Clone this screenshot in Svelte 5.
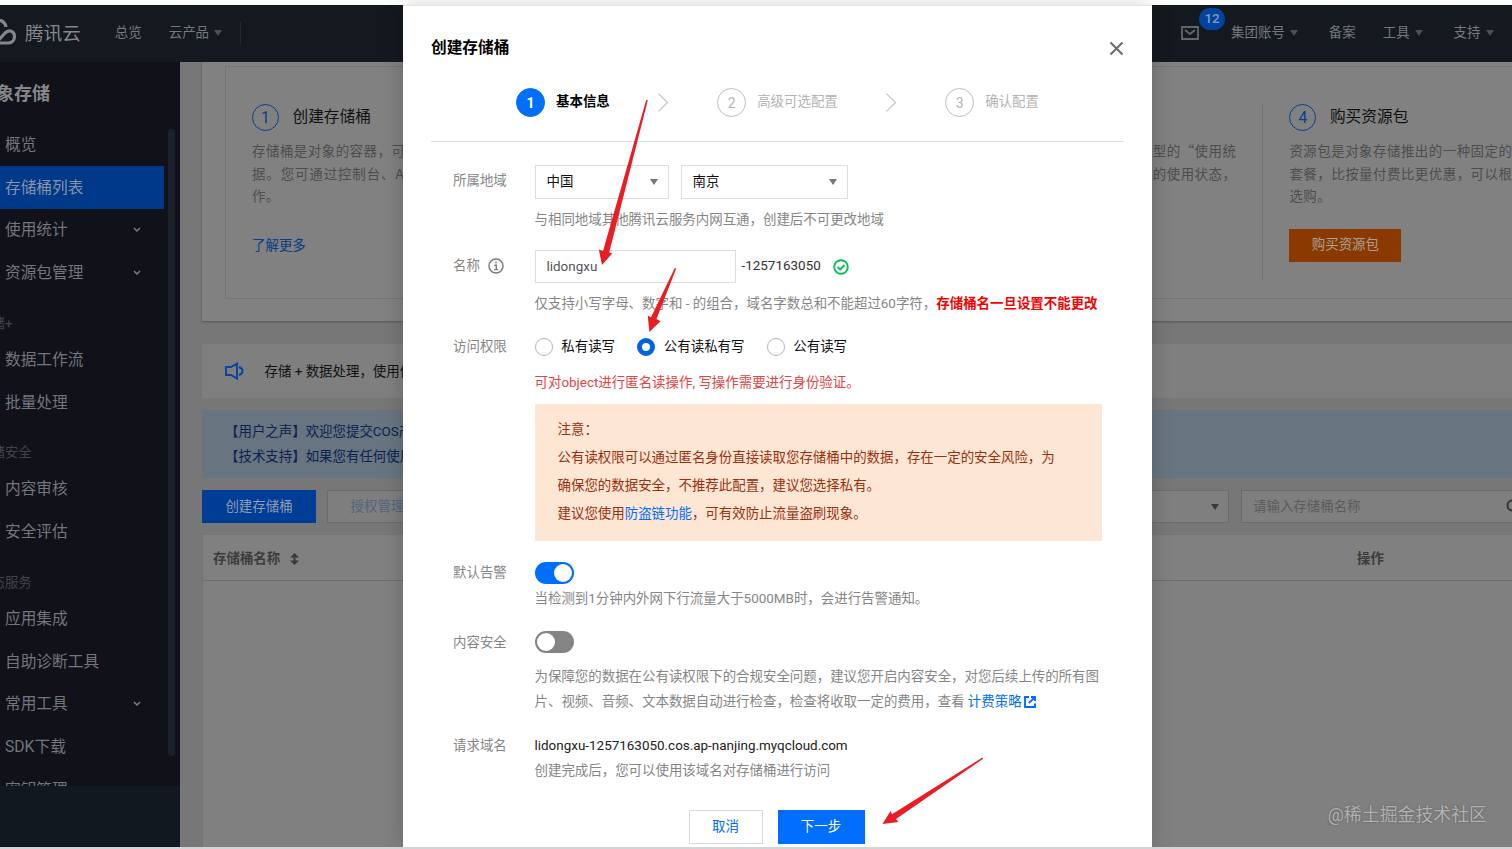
<script>
  const menu = [
    { name: "概览" },
    { name: "存储桶列表", active: true },
    { name: "使用统计", more: true },
    { name: "资源包管理", more: true },
    { name: "存储+", heading: true },
    { name: "数据工作流" },
    { name: "批量处理" },
    { name: "存储安全", heading: true },
    { name: "内容审核" },
    { name: "安全评估" },
    { name: "生态服务", heading: true },
    { name: "应用集成" },
    { name: "自助诊断工具" },
    { name: "常用工具", more: true },
    { name: "SDK下载" },
    { name: "密钥管理" },
  ]
  const steps = ["基本信息", "高级可选配置", "确认配置"]
  const access = ["私有读写", "公有读私有写", "公有读写"]
  let step = 0
  let selected = 1
  let bucketName = "lidongxu"
  let alarm = true
  let safety = false
</script>

<div class="page">
  <header class="nav">
    <svg class="logo" width="17" height="28" viewBox="0 0 17 28">
      <path d="M-6 2C0 -1 5 3 6 8M-4 24L5 14C9 10 14.500 12 14.500 17.500C14.500 22 11 24 8 24H-4" fill="none" stroke="#85888b" stroke-width="3.200" />
    </svg>
    <span class="brand">腾讯云</span>
    <span class="nav-item overview">总览</span>
    <span class="nav-item">云产品<i class="caret"></i></span>
    <i class="nav-line"></i>
    <div class="nav-right">
      <div class="mail">
        <svg width="18" height="14" viewBox="0 0 18 14"><path d="M1 1H17V13H1ZM4 4L9 8L14 4" fill="none" stroke="#62676b" stroke-width="1.800" /></svg>
        <b class="badge">12</b>
      </div>
      <span class="nav-item account">集团账号<i class="caret"></i></span>
      <span class="nav-item record">备案</span>
      <span class="nav-item tool">工具<i class="caret"></i></span>
      <span class="nav-item">支持<i class="caret"></i></span>
    </div>
  </header>

  <div class="body">
    <aside class="sidebar">
      <div class="menu">
        <h1>对象存储</h1>
        {#each menu as item}
          {#if item.heading}
            <div class="menu-heading">{item.name}</div>
          {:else}
            <div class="menu-item" class:active={item.active}>
              <span>{item.name}</span>
              {#if item.more}
                <svg width="8" height="6" viewBox="0 0 8 6"><path d="M1 1L4 4L7 1" fill="none" stroke="#7b7e82" stroke-width="1.500" /></svg>
              {/if}
            </div>
          {/if}
        {/each}
        <i class="scrollbar"></i>
      </div>
    </aside>

    <main class="main">
      <section class="guide">
        <div class="guide-box">
          <div class="guide-step">
            <h3><i>1</i>创建存储桶</h3>
            <p>存储桶是对象的容器，可存<br /><span class="wide">据。您可通过控制台、API</span><br />作。</p>
            <a href="#more">了解更多</a>
          </div>
          <div class="guide-step"></div>
          <div class="guide-step right">
            <p>型的“使用统<br />的使用状态，</p>
          </div>
          <div class="guide-step">
            <h3><i>4</i>购买资源包</h3>
            <p>资源包是对象存储推出的一种固定的<br />套餐，比按量付费比更优惠，可以根据<br />选购。</p>
            <button class="buy">购买资源包</button>
          </div>
        </div>
      </section>

      <section class="notice">
        <svg width="19" height="18" viewBox="0 0 19 18"><path d="M1 5H6L12 1.500V16.500L6 13H1ZM14 5Q17.500 6 17.500 9Q17.500 12 14 13" fill="none" stroke="#07449a" stroke-width="1.900" /></svg>
        <span>存储 + 数据处理，使用便捷</span>
      </section>

      <section class="tips">
        <p>【用户之声】欢迎您提交COS产品</p>
        <p>【技术支持】如果您有任何使用</p>
      </section>

      <div class="toolbar">
        <button class="create">创建存储桶</button>
        <button class="auth">授权管理</button>
        <div class="filter"><i class="caret"></i></div>
        <div class="search">
          <span>请输入存储桶名称</span>
          <svg width="16" height="16" viewBox="0 0 16 16"><circle cx="6.500" cy="6.500" r="5" fill="none" stroke="#333" stroke-width="2" /><path d="M10 10L15 15" stroke="#333" stroke-width="2" /></svg>
        </div>
      </div>

      <section class="table">
        <div class="thead">
          <span class="col-name">存储桶名称
            <svg width="9" height="12" viewBox="0 0 9 12"><path d="M4.500 0L9 4.500H5.500V7.500H9L4.500 12L0 7.500H3.500V4.500H0Z" fill="#393939" /></svg>
          </span>
          <span class="col-action">操作</span>
        </div>
      </section>
    </main>
  </div>

  <div class="dialog">
    <div class="dialog-head">
      <h2>创建存储桶</h2>
      <svg class="close" width="15" height="15" viewBox="0 0 15 15"><path d="M1.500 1.500L13.500 13.500M13.500 1.500L1.500 13.500" stroke="#6c6c6c" stroke-width="2" /></svg>
    </div>

    <div class="steps">
      {#each steps as name, i}
        <div class="step" class:current={step === i}>
          <i>{i + 1}</i><span>{name}</span>
        </div>
        {#if i < steps.length - 1}
          <svg class="arrow" width="12" height="19" viewBox="0 0 12 19"><path d="M1.500 0.700L10.500 9.500L1.500 18.300" fill="none" stroke="#bfbfbf" stroke-width="1.100" /></svg>
        {/if}
      {/each}
    </div>

    <div class="form">
      <div class="row region">
        <label>所属地域</label>
        <div class="field">
          <div class="line">
            <div class="select country">中国<i class="caret"></i></div>
            <div class="select city">南京<i class="caret"></i></div>
          </div>
          <p class="hint">与相同地域其他腾讯云服务内网互通，创建后不可更改地域</p>
        </div>
      </div>

      <div class="row name">
        <label>名称
          <svg width="16" height="16" viewBox="0 0 16 16"><circle cx="8" cy="8" r="7" fill="none" stroke="#7d7d7d" stroke-width="1.500" /><path d="M8 3.600V5.400M6.300 7.300H8.300V11.500M6 11.600H10.300" fill="none" stroke="#7d7d7d" stroke-width="1.400" /></svg>
        </label>
        <div class="field">
          <div class="line">
            <input bind:value={bucketName} />
            <span class="appid">-1257163050</span>
            <svg width="16" height="16" viewBox="0 0 16 16"><circle cx="8" cy="8" r="6.800" fill="none" stroke="#0abf5b" stroke-width="1.900" /><path d="M4.500 8L7.200 10.400L11.500 6" fill="none" stroke="#0abf5b" stroke-width="1.900" /></svg>
          </div>
          <p class="hint">仅支持小写字母、数字和 - 的组合，域名字数总和不能超过60字符，<b>存储桶名一旦设置不能更改</b></p>
        </div>
      </div>

      <div class="row access">
        <label>访问权限</label>
        <div class="field">
          <div class="radios">
            {#each access as name, i}
              <span class="radio" class:checked={selected === i} on:click={() => (selected = i)}><i></i>{name}</span>
            {/each}
          </div>
          <p class="danger">可对object进行匿名读操作, 写操作需要进行身份验证。</p>
          <div class="warning">
            <p>注意：</p>
            <p>公有读权限可以通过匿名身份直接读取您存储桶中的数据，存在一定的安全风险，为</p>
            <p>确保您的数据安全，不推荐此配置，建议您选择私有。</p>
            <p>建议您使用<a href="#referer">防盗链功能</a>，可有效防止流量盗刷现象。</p>
          </div>
        </div>
      </div>

      <div class="row alarm">
        <label>默认告警</label>
        <div class="field">
          <div class="switch" class:on={alarm} on:click={() => (alarm = !alarm)}><i></i></div>
          <p class="hint">当检测到1分钟内外网下行流量大于5000MB时，会进行告警通知。</p>
        </div>
      </div>

      <div class="row safety">
        <label>内容安全</label>
        <div class="field">
          <div class="switch" class:on={safety} on:click={() => (safety = !safety)}><i></i></div>
          <p class="hint">为保障您的数据在公有读权限下的合规安全问题，建议您开启内容安全，对您后续上传的所有图<br />片、视频、音频、文本数据自动进行检查，检查将收取一定的费用，查看 <a href="#price">计费策略
            <svg width="12" height="12" viewBox="0 0 12 12"><path d="M5 1H1V11H11V7.500M7 1H11V5M11 1L4.800 7.200" fill="none" stroke="#006eff" stroke-width="1.900" /></svg></a></p>
        </div>
      </div>

      <div class="row domain">
        <label>请求域名</label>
        <div class="field">
          <p class="url">{bucketName}-1257163050.cos.ap-nanjing.myqcloud.com</p>
          <p class="hint">创建完成后，您可以使用该域名对存储桶进行访问</p>
        </div>
      </div>
    </div>

    <div class="dialog-foot">
      <button class="cancel">取消</button>
      <button class="next">下一步</button>
    </div>
  </div>

  <!-- red pointers over the form -->
  <svg class="marks" width="1512" height="849" viewBox="0 0 1512 849">
    <path d="M646.200 100L647.800 100.300L609.200 252.500L612.300 253.300L602 265L598.800 249.500L603 251Z" />
    <path d="M674.800 268L676.200 268.600L656.500 319L660.500 321.300L649.300 332L647.800 315.800L651 317.200Z" />
    <path d="M982.500 757.500L983.200 758.700L896 819L898.500 822L882.500 824L890.500 811L892 814.200Z" />
  </svg>
  <span class="watermark">@稀土掘金技术社区</span>
</div>

<style>
  :global(body) {
    margin: 0;
  }
  .page {
    position: relative;
    box-sizing: border-box;
    width: 1512px;
    height: 849px;
    padding-top: 5px;
    border-bottom: 2px solid #d3d4d6;
    overflow: hidden;
    background: #fff;
    font-family: Roboto, "Noto Sans CJK SC", sans-serif;
    font-size: 13.44px;
    line-height: 20px;
    color: #111;
  }
  .page * {
    box-sizing: border-box;
  }
  h1, h2, h3, p {
    margin: 0;
  }
  i {
    font-style: normal;
  }
  a {
    text-decoration: none;
  }
  button {
    font: inherit;
    padding: 0;
    border: 0;
  }
  svg {
    display: block;
    flex: none;
  }
  .caret {
    display: block;
    width: 0;
    height: 0;
    border: 4.5px solid transparent;
    border-top: 6px solid #4b4f53;
    border-bottom: 0;
  }

  /* top bar */
  .nav {
    display: flex;
    align-items: center;
    height: 57px;
    padding-bottom: 1px;
    background: #13191f;
    color: #75797c;
  }
  .brand {
    margin-left: 8px;
    padding-top: 2px;
    font-size: 18.6px;
    color: #85888b;
  }
  .nav-item {
    display: flex;
    align-items: center;
    gap: 5px;
    white-space: nowrap;
  }
  .overview {
    margin: 0 27px 0 34px;
  }
  .nav-line {
    width: 1px;
    height: 22px;
    margin-left: 18px;
    background: #24292f;
  }
  .nav-right {
    display: flex;
    align-items: center;
    margin-left: auto;
    padding-right: 18.500px;
  }
  .mail {
    position: relative;
    margin-right: 32px;
  }
  .badge {
    position: absolute;
    left: 18px;
    top: -18px;
    width: 26px;
    height: 22px;
    border-radius: 11px;
    background: #0043a0;
    color: #8899b0;
    text-align: center;
    line-height: 21px;
    font-weight: 500;
  }
  .account {
    margin-right: 31px;
  }
  .record {
    margin-right: 27px;
  }
  .tool {
    margin-right: 31px;
  }

  .body {
    display: flex;
    height: 785px;
    background: #777;
  }
  .sidebar {
    flex: none;
    width: 180px;
    height: 785px;
    background: #12181f;
  }
  .menu {
    position: relative;
    height: 724px;
    overflow: hidden;
    background: #101119;
    color: #73767a;
  }
  .menu h1 {
    height: 61.500px;
    margin-left: -22px;
    font-size: 18px;
    line-height: 64px;
    color: #85878a;
  }
  .menu-item {
    display: flex;
    align-items: center;
    justify-content: space-between;
    width: 163.500px;
    height: 42.750px;
    padding: 0 23px 0 5px;
    font-size: 15.700px;
  }
  .menu-item.active {
    background: #00388a;
    color: #8795a9;
  }
  .menu-heading {
    height: 44px;
    margin-left: -22px;
    padding-top: 14px;
    line-height: 30px;
    color: #414448;
  }
  .scrollbar {
    position: absolute;
    left: 168px;
    top: 67px;
    width: 7px;
    height: 627px;
    border-radius: 3px;
    background: #1a212a;
  }

  .main {
    flex: none;
    width: 1460px;
    padding-left: 22px;
  }
  .guide {
    height: 259px;
    padding: 4px 23px 23px;
    background: #818181;
    box-shadow: 0 1px 2px #555;
  }
  .guide-box {
    display: grid;
    grid-template-columns: repeat(4, 345.800px);
    height: 233px;
    padding: 36px 0 17px;
    border: 1px solid #757575;
  }
  .guide-step {
    padding: 0 26px;
    border-right: 1px solid #747474;
    white-space: nowrap;
  }
  .guide-step h3 {
    display: flex;
    align-items: center;
    gap: 13.500px;
    height: 28px;
    font-size: 15.700px;
    line-height: 22px;
    font-weight: 400;
  }
  .guide-step h3 i {
    width: 27px;
    height: 27px;
    border: 1px solid #073f8c;
    border-radius: 50%;
    text-align: center;
    line-height: 25px;
    color: #073f8c;
  }
  .guide-step p {
    margin-top: 8px;
    font-family: "Noto Sans CJK SC", sans-serif;
    line-height: 22.500px;
    letter-spacing: 0.500px;
    color: #4d4d4d;
  }
  .guide-step .wide {
    letter-spacing: 0.900px;
  }
  .guide-step.right p {
    margin-top: 36px;
    text-align: right;
  }
  .guide-step a {
    display: block;
    margin-top: 29px;
    color: #063c88;
  }
  .buy {
    width: 112px;
    height: 33px;
    margin-top: 22px;
    background: #8a3900;
    color: #a9a098;
  }
  .notice {
    display: flex;
    align-items: center;
    gap: 21px;
    height: 54px;
    margin-top: 23px;
    padding-left: 22.500px;
    background: #7f7f7f;
  }
  .notice span {
    padding-top: 1px;
  }
  .tips {
    height: 68px;
    margin-top: 12px;
    padding: 9px 23px;
    background: #68747f;
    color: #0b2250;
    line-height: 25px;
  }
  .toolbar {
    display: flex;
    height: 33px;
    margin-top: 12px;
  }
  .create {
    width: 114px;
    background: #003d96;
    color: #8d9cb4;
  }
  .auth {
    width: 101px;
    margin-left: 11px;
    border: 1px solid #6a6a6a;
    background: #7e7e7e;
    color: #52647f;
  }
  .filter {
    display: flex;
    align-items: center;
    justify-content: flex-end;
    width: 181px;
    margin-left: 620px;
    padding-right: 9px;
    border: 1px solid #6c6c6c;
    background: #7f7f7f;
  }
  .filter .caret {
    border-top-color: #393939;
  }
  .search {
    display: flex;
    align-items: center;
    justify-content: space-between;
    width: 293px;
    margin-left: 12px;
    padding: 0 11px;
    border: 1px solid #6a6a6a;
    background: #7f7f7f;
    color: #5b5b5b;
  }
  .table {
    height: 312px;
    margin-top: 12px;
    border-left: 1px solid #757575;
    background: #808080;
  }
  .thead {
    display: flex;
    align-items: center;
    height: 46px;
    padding-top: 2px;
    border-bottom: 1px solid #6d6d6d;
    font-weight: 700;
    color: #3c3c3c;
  }
  .col-name {
    display: flex;
    align-items: center;
    gap: 9.500px;
    width: 1154px;
    padding-left: 10px;
  }

  /* dialog */
  .dialog {
    position: absolute;
    left: 403px;
    top: 5px;
    width: 749px;
    height: 842px;
    padding: 0 28px;
    border-top: 1px solid #e4e4e4;
    background: #fff;
    box-shadow: 0 2px 20px rgba(0, 0, 0, 0.2);
  }
  .dialog-head {
    display: flex;
    align-items: center;
    justify-content: space-between;
    height: 82px;
    padding-top: 2px;
  }
  .dialog h2 {
    font-size: 15.700px;
    color: #000;
  }
  .steps {
    display: flex;
    height: 54px;
    padding-left: 85px;
    border-bottom: 1px solid #dedede;
    white-space: nowrap;
  }
  .step {
    display: flex;
    gap: 11px;
    height: 29px;
    line-height: 28px;
    color: #b3b3b3;
  }
  .step i {
    width: 29px;
    height: 29px;
    border: 1px solid #bcbcbc;
    border-radius: 50%;
    text-align: center;
    font-size: 14px;
    line-height: 28px;
  }
  .step.current {
    color: #000;
    font-weight: 700;
  }
  .step.current i {
    border-color: #006eff;
    background: #006eff;
    color: #fff;
  }
  .arrow {
    margin: 5px 48.200px 0 47.200px;
  }
  .form {
    padding: 23px 0 0 22px;
  }
  .row {
    display: flex;
  }
  .row label {
    display: flex;
    align-items: center;
    gap: 8px;
    flex: none;
    width: 81.500px;
    height: 20px;
    margin-top: 1px;
    color: #868686;
  }
  .field {
    white-space: nowrap;
  }
  .line {
    display: flex;
    align-items: center;
  }
  .hint {
    color: #868686;
  }
  .region {
    height: 85px;
  }
  .region label,
  .name label {
    margin-top: 6px;
  }
  .region .hint,
  .name .hint {
    margin-top: 11px;
  }
  .select {
    display: flex;
    align-items: center;
    justify-content: space-between;
    height: 34px;
    padding: 0 10px 0 11px;
    border: 1px solid #ddd;
    color: #111;
  }
  .select .caret {
    border-top-color: #777;
  }
  .country {
    width: 134px;
  }
  .city {
    width: 167px;
    margin-left: 12px;
  }
  .name {
    height: 86px;
  }
  .name input {
    width: 201px;
    height: 33px;
    padding: 0 11px;
    border: 1px solid #ddd;
    outline: none;
    font: inherit;
    color: #555;
  }
  .appid {
    margin: -2px 12px 0 6px;
    color: #333;
  }
  .name .hint b {
    color: #fa0000;
  }
  .access {
    height: 226px;
  }
  .radios {
    display: flex;
    gap: 22px;
  }
  .radio {
    display: flex;
    align-items: center;
    gap: 8.800px;
    height: 21px;
    line-height: 22px;
  }
  .radio i {
    width: 18px;
    height: 18px;
    border: 1px solid #b5b5b5;
    border-radius: 50%;
  }
  .radio.checked i {
    border: 5px solid #0062e5;
  }
  .danger {
    margin-top: 16px;
    color: #e54545;
  }
  .warning {
    width: 567.500px;
    height: 137px;
    margin-top: 11px;
    padding: 12px 23px;
    background: #fde6d4;
    color: #9c2f0c;
    line-height: 28px;
  }
  .field a {
    color: #006eff;
  }
  .alarm {
    height: 69px;
  }
  .switch {
    width: 39px;
    height: 22px;
    padding: 2px;
    border-radius: 11px;
    background: #848484;
  }
  .switch i {
    display: block;
    width: 18px;
    height: 18px;
    border-radius: 50%;
    background: #fff;
  }
  .switch.on {
    background: #006eff;
  }
  .switch.on i {
    margin-left: 17px;
  }
  .alarm .hint {
    margin-top: 5px;
  }
  .safety {
    height: 104px;
  }
  .safety label {
    margin-top: 2px;
  }
  .safety .hint {
    margin-top: 12px;
    line-height: 24.500px;
  }
  .safety svg {
    display: inline-block;
    margin-left: -1px;
    vertical-align: -2px;
  }
  .domain {
    height: 75px;
  }
  .domain .url {
    margin-top: 1px;
    color: #222;
  }
  .domain .hint {
    margin-top: 5px;
  }
  .dialog-foot {
    display: flex;
    justify-content: center;
    gap: 15px;
    padding-right: 2px;
  }
  .cancel {
    width: 74px;
    height: 34px;
    border: 1px solid #d6dade;
    background: #fff;
    color: #006eff;
  }
  .next {
    width: 87px;
    height: 34px;
    background: #006eff;
    color: #fff;
  }
  .marks {
    position: absolute;
    left: 0;
    top: 0;
    fill: #ea1c24;
    pointer-events: none;
  }
  .watermark {
    position: absolute;
    right: 25px;
    top: 804px;
    font-size: 17.900px;
    line-height: 22px;
    color: #b2b2b2;
    text-shadow: 0 0 2px #555;
  }
</style>
